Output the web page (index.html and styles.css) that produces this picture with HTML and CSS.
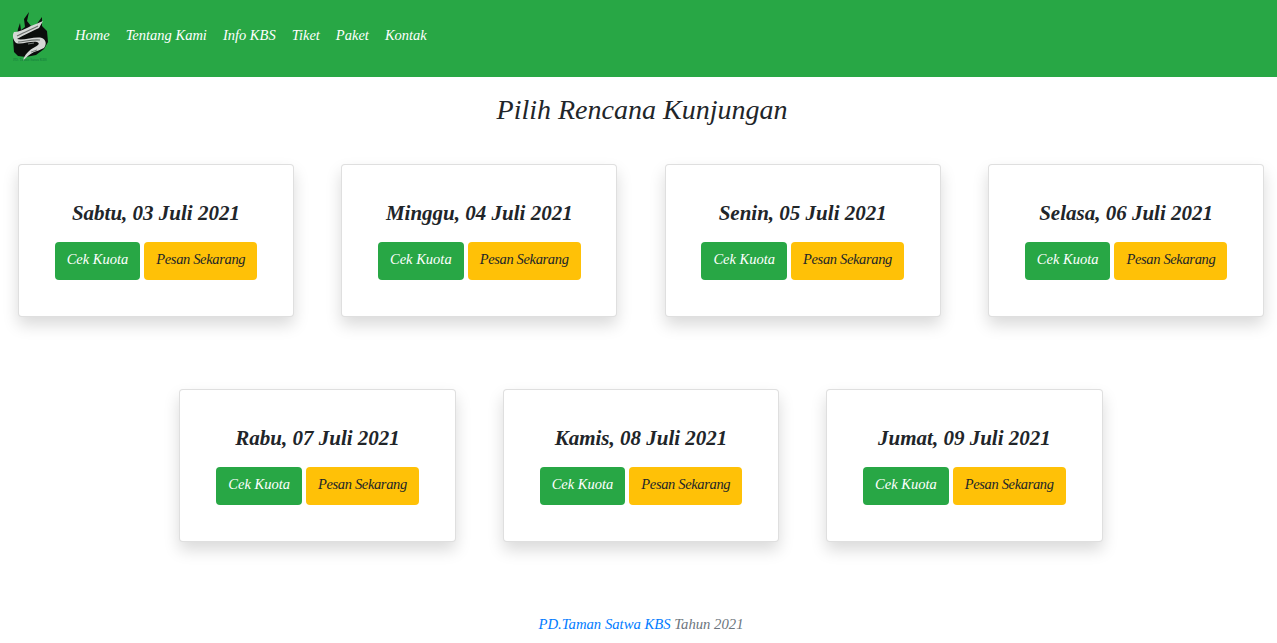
FILE: index.html
```html
<!DOCTYPE html>
<html lang="id">
<head>
<meta charset="utf-8">
<title>Pilih Rencana Kunjungan</title>
<link rel="stylesheet" href="styles.css">
</head>
<body>
<nav class="navbar">
  <svg class="logo" viewBox="0 0 40 52" width="40" height="52" aria-hidden="true">
    <path d="M4 40 L3 27 L7 23 L8 17 L10 11 L11 18 L15 15 L14 7 L19 0 L17 9 L21 14 L26 13 L32 5 L32 14 L37 19 L38 30 L34 37 L26 43 L16 45 L8 44 Z" fill="#0b0e0c"/>
    <path d="M4 20 C12 20 19 14 26 12 L33 9 L29 16 C22 19 14 23 7 27 C13 29 25 24 32 26 C36 28 37 32 34 36 C30 38 27 39 24 40 C20 42 16 45 13 49 C14 43 19 38 25 35 C29 33 30 31 27 30 C20 29 11 33 6 31 C3 28 2 23 4 20 Z" fill="#d5d8d6"/>
    <path d="M7 24 C13 21 20 18 28 14 M8 30 C14 30 22 27 30 28" stroke="#6b706d" stroke-width="1.2" fill="none"/>
    <path d="M18 32 L24 31 M27 38 L21 40" stroke="#7a807c" stroke-width="1" fill="none"/>
    <text class="logo-caption" x="20" y="48.5" text-anchor="middle">PD. Taman Satwa KBS</text>
  </svg>
  <ul class="nav-list">
    <li><a href="#">Home</a></li>
    <li><a href="#">Tentang Kami</a></li>
    <li><a href="#">Info KBS</a></li>
    <li><a href="#">Tiket</a></li>
    <li><a href="#">Paket</a></li>
    <li><a href="#">Kontak</a></li>
  </ul>
</nav>
<main>
  <h2 class="page-title">Pilih Rencana Kunjungan</h2>
  <div class="card-row">
    <section class="card"><h4>Sabtu, 03 Juli 2021</h4><div class="actions"><a class="btn btn-green" href="#">Cek Kuota</a><a class="btn btn-yellow" href="#">Pesan Sekarang</a></div></section>
    <section class="card"><h4>Minggu, 04 Juli 2021</h4><div class="actions"><a class="btn btn-green" href="#">Cek Kuota</a><a class="btn btn-yellow" href="#">Pesan Sekarang</a></div></section>
    <section class="card"><h4>Senin, 05 Juli 2021</h4><div class="actions"><a class="btn btn-green" href="#">Cek Kuota</a><a class="btn btn-yellow" href="#">Pesan Sekarang</a></div></section>
    <section class="card"><h4>Selasa, 06 Juli 2021</h4><div class="actions"><a class="btn btn-green" href="#">Cek Kuota</a><a class="btn btn-yellow" href="#">Pesan Sekarang</a></div></section>
  </div>
  <div class="card-row">
    <section class="card"><h4>Rabu, 07 Juli 2021</h4><div class="actions"><a class="btn btn-green" href="#">Cek Kuota</a><a class="btn btn-yellow" href="#">Pesan Sekarang</a></div></section>
    <section class="card"><h4>Kamis, 08 Juli 2021</h4><div class="actions"><a class="btn btn-green" href="#">Cek Kuota</a><a class="btn btn-yellow" href="#">Pesan Sekarang</a></div></section>
    <section class="card"><h4>Jumat, 09 Juli 2021</h4><div class="actions"><a class="btn btn-green" href="#">Cek Kuota</a><a class="btn btn-yellow" href="#">Pesan Sekarang</a></div></section>
  </div>
</main>
<footer class="footer"><a href="#">PD.Taman Satwa KBS</a> Tahun 2021</footer>
</body>
</html>
```
FILE: styles.css
```css
* { box-sizing: border-box; }
html, body { height: 100%; }
body {
  margin: 0;
  font-family: "Liberation Serif", "Times New Roman", serif;
  font-style: italic;
  font-size: 14.5px;
  line-height: 24px;
  color: #212529;
  background: #fff;
  overflow: hidden;
}
a { text-decoration: none; }
.navbar {
  height: 77px;
  background: #28a745;
  display: flex;
  align-items: flex-start;
  padding: 12px 10px 0;
}
.logo { flex: none; }
.logo-caption { font-size: 3.6px; fill: #137a3c; font-style: normal; }
.nav-list {
  display: flex;
  list-style: none;
  margin: 11px 0 0 25px;
  padding: 0;
  gap: 16px;
}
.nav-list a { color: #fff; }
.page-title {
  margin: 14px 0 36px;
  height: 37px;
  font-size: 28px;
  font-weight: 400;
  line-height: 37px;
  text-align: center;
  padding-left: 7px;
}
.card-row {
  display: flex;
  justify-content: center;
  gap: 47.1px;
  padding-left: 5px;
  margin-bottom: 72px;
}
.card {
  width: 276.3px;
  height: 153px;
  flex: none;
  background: #fff;
  border: 1px solid rgba(0,0,0,.125);
  border-radius: 4px;
  box-shadow: 0 8px 16px rgba(0,0,0,.15);
  padding: 34px 20px 0;
  text-align: center;
}
.card h4 {
  margin: 0 0 14px;
  font-size: 21px;
  font-weight: 700;
  line-height: 29px;
}
.actions { display: flex; justify-content: center; gap: 4px; }
.btn {
  display: block;
  padding: 5px 12px;
  height: 38px;
  border-radius: 4px;
}
.btn-green { background: #28a745; color: #fff; }
.btn-yellow { background: #ffc107; color: #212529; letter-spacing: -.35px; }
.footer {
  position: absolute;
  left: 5px; right: 0; top: 612px;
  text-align: center;
  color: #6c757d;
  font-size: 14.7px;
}
.footer a { color: #007bff; }
```
